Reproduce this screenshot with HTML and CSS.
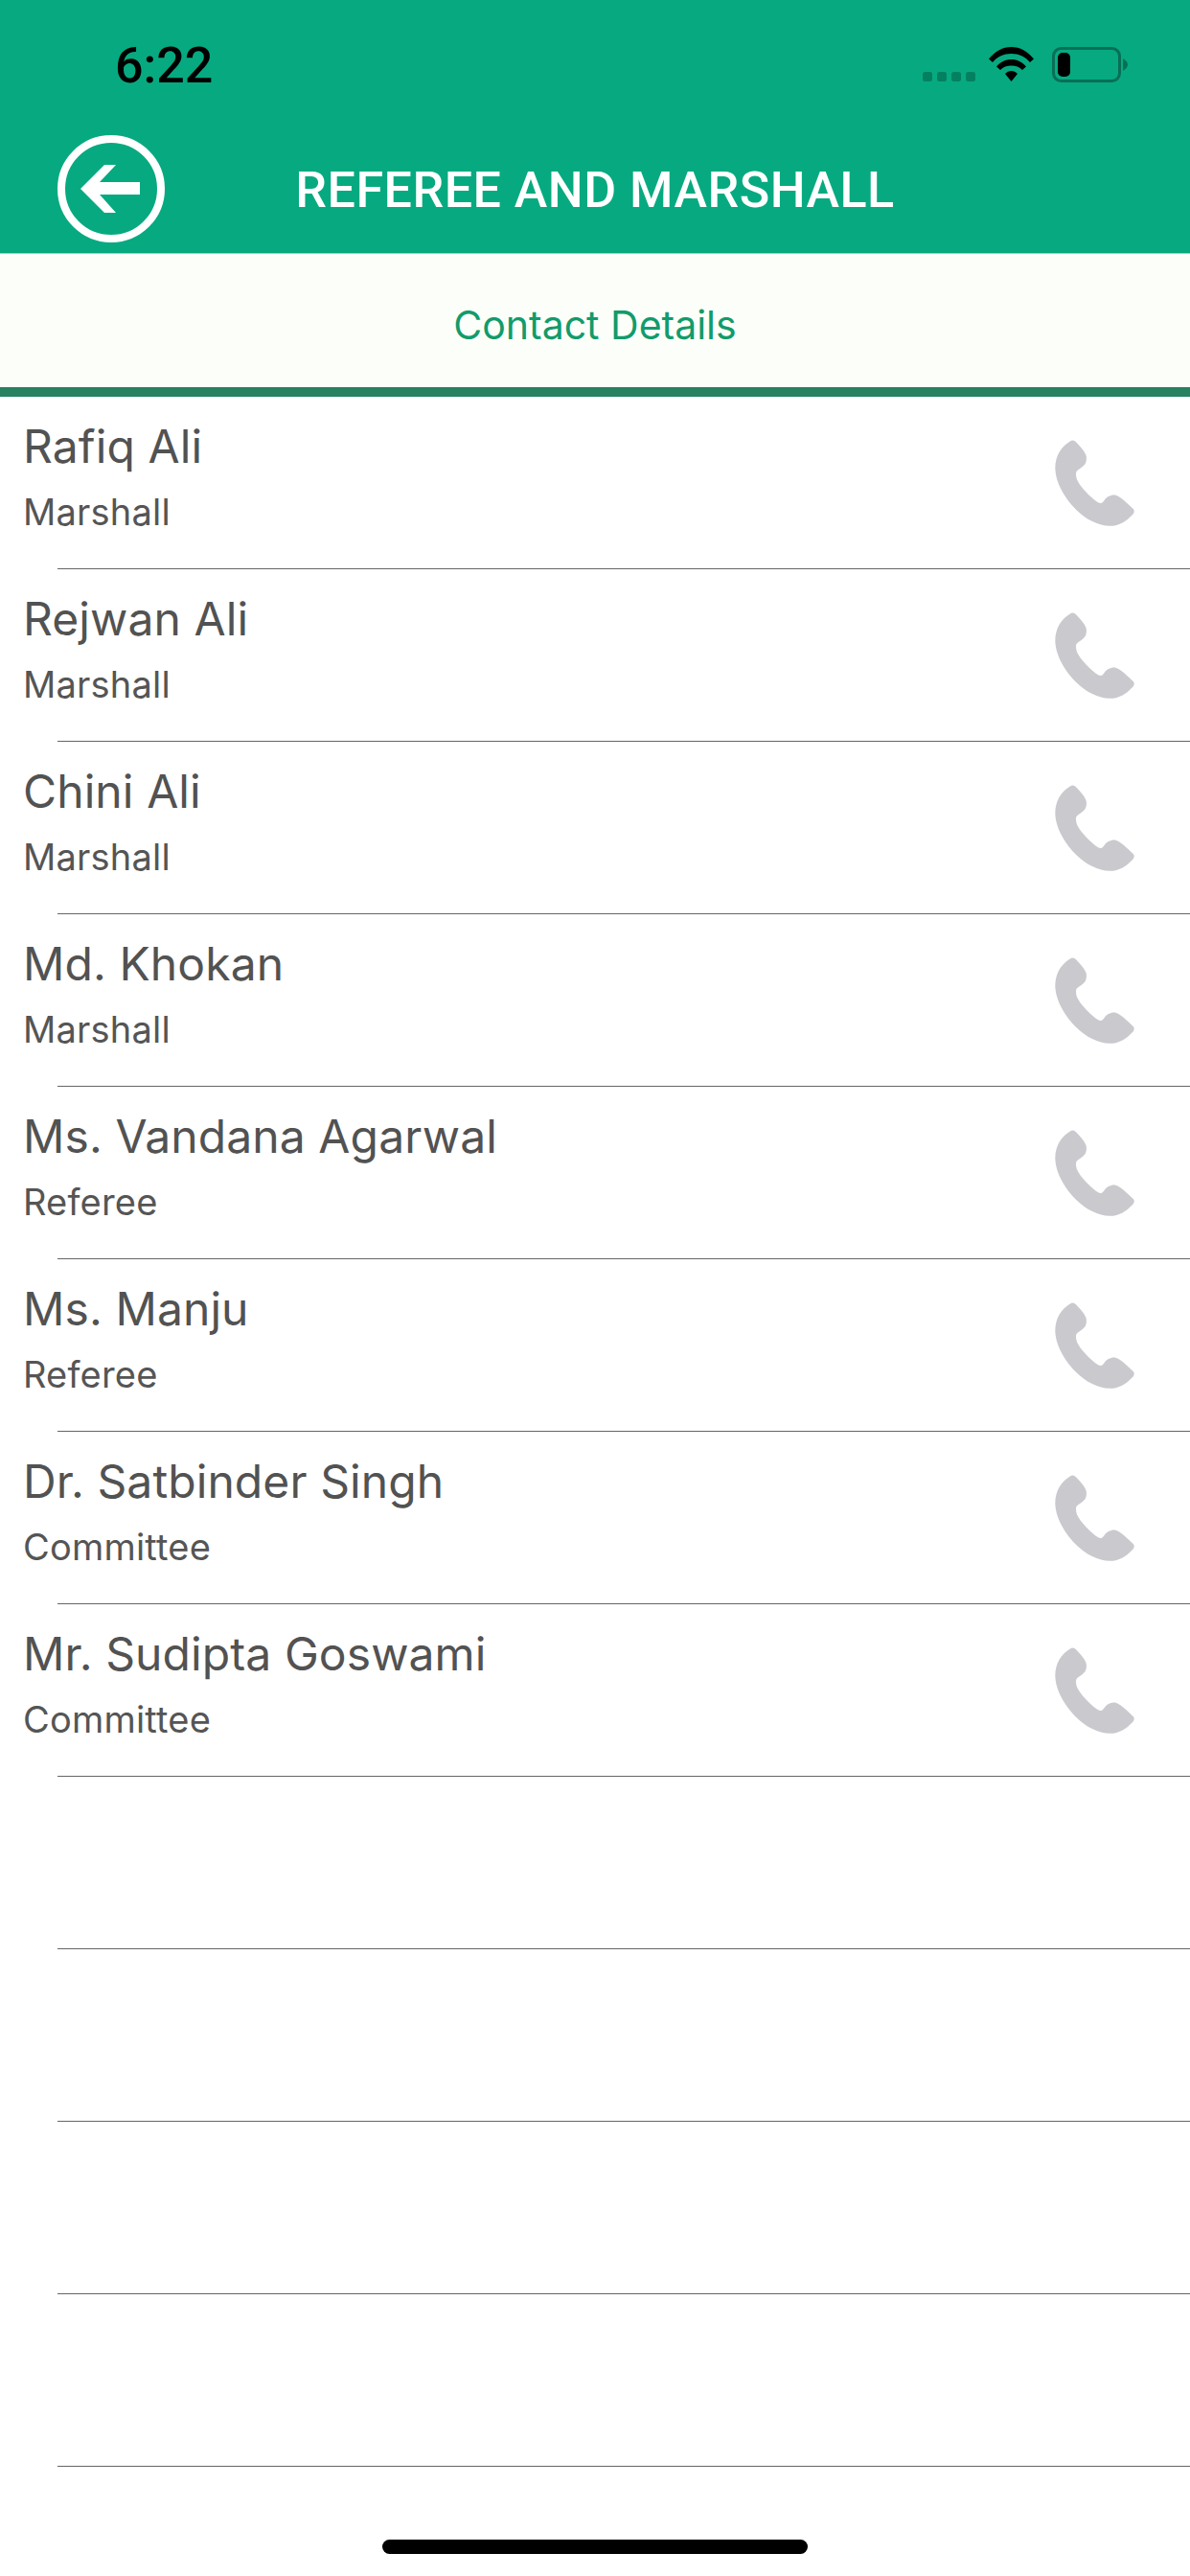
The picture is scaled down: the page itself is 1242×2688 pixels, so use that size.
FILE: index.html
```html
<!DOCTYPE html>
<html lang="en">
<head>
<meta charset="utf-8">
<title>Referee and Marshall</title>
<link rel="stylesheet" href="styles.css">
</head>
<body>
<svg class="defs" width="0" height="0" aria-hidden="true">
  <symbol id="phone" viewBox="0 0 246 266">
    <path d="M47 4C54 -1 60 1 66 7C78 19 90 33 96 46C99 54 98 68 92 76C85 84 74 90 67 97C64 102 65 112 68 122C78 145 112 180 135 194C143 198 148 193 153 186C160 176 172 169 186 170C200 172 230 201 243 214C247 220 245 227 238 233C222 250 200 266 170 266C135 265 95 246 66 216C36 186 3 138 1 90C0 50 20 20 47 4Z"/>
  </symbol>
</svg>
<div class="screen">
  <header class="header">
    <div class="status">
      <span class="time">6:22</span>
      <div class="status-icons">
        <div class="signal"><i></i><i></i><i></i><i></i></div>
        <svg class="wifi" viewBox="0 0 47 36" width="47" height="36">
          <path d="M0 12.500C6.500 4.500 14.500 0 23.500 0C32.500 0 40.500 4.500 47 12.500L43 16C38 10 31 7 23.500 7C16 7 9 10 4 16Z"/>
          <path d="M8 20.500C12 15.500 17.500 13 23.500 13C29.500 13 35 15.500 39 20.500L35 24C32 20.800 28 19.500 23.500 19.500C19 19.500 15 20.800 12 24Z"/>
          <path d="M17 28C18.800 26 21 25 23.500 25C26 25 28.200 26 30 28L23.500 36Z"/>
        </svg>
        <svg class="battery" viewBox="0 0 79 37" width="79" height="37">
          <rect class="battery-shell" x="1.500" y="1.500" width="69" height="34" rx="8"/>
          <rect class="battery-level" x="6" y="6" width="13" height="25" rx="5"/>
          <path class="battery-nub" d="M74 12C77 14 79 16 79 18.500C79 21 77 23 74 25Z"/>
        </svg>
      </div>
    </div>
    <div class="navbar">
      <svg class="back" viewBox="0 0 112 112" width="112" height="112">
        <circle class="back-ring" cx="56" cy="56" r="52"/>
        <path class="back-arrow" d="M24 56L49 31H61L44 49H86V62H44L61 81H49Z"/>
      </svg>
      <h1 class="title">REFEREE AND MARSHALL</h1>
    </div>
  </header>
  <div class="subhead">Contact Details</div>
  <main class="list">
    <div class="row"><div class="row-body"><div class="who"><div class="name">Rafiq Ali</div><div class="role">Marshall</div></div><svg class="call"><use href="#phone"/></svg></div><div class="sep"></div></div>
    <div class="row"><div class="row-body"><div class="who"><div class="name">Rejwan Ali</div><div class="role">Marshall</div></div><svg class="call"><use href="#phone"/></svg></div><div class="sep"></div></div>
    <div class="row"><div class="row-body"><div class="who"><div class="name">Chini Ali</div><div class="role">Marshall</div></div><svg class="call"><use href="#phone"/></svg></div><div class="sep"></div></div>
    <div class="row"><div class="row-body"><div class="who"><div class="name">Md. Khokan</div><div class="role">Marshall</div></div><svg class="call"><use href="#phone"/></svg></div><div class="sep"></div></div>
    <div class="row"><div class="row-body"><div class="who"><div class="name">Ms. Vandana Agarwal</div><div class="role">Referee</div></div><svg class="call"><use href="#phone"/></svg></div><div class="sep"></div></div>
    <div class="row"><div class="row-body"><div class="who"><div class="name">Ms. Manju</div><div class="role">Referee</div></div><svg class="call"><use href="#phone"/></svg></div><div class="sep"></div></div>
    <div class="row"><div class="row-body"><div class="who"><div class="name">Dr. Satbinder Singh</div><div class="role">Committee</div></div><svg class="call"><use href="#phone"/></svg></div><div class="sep"></div></div>
    <div class="row"><div class="row-body"><div class="who"><div class="name">Mr. Sudipta Goswami</div><div class="role">Committee</div></div><svg class="call"><use href="#phone"/></svg></div><div class="sep"></div></div>
    <div class="row"><div class="row-body"></div><div class="sep"></div></div>
    <div class="row"><div class="row-body"></div><div class="sep"></div></div>
    <div class="row"><div class="row-body"></div><div class="sep"></div></div>
    <div class="row"><div class="row-body"></div><div class="sep"></div></div>
  </main>
  <div class="home-wrap"><div class="home"></div></div>
</div>
</body>
</html>
```
FILE: styles.css
```css
* { box-sizing: border-box; }
html, body { margin: 0; padding: 0; background: #fff; }
.defs { display: block; height: 0; }
.screen {
  width: 1242px;
  height: 2688px;
  overflow: hidden;
  display: flex;
  flex-direction: column;
  font-family: Inter, "Liberation Sans", sans-serif;
}
.header {
  height: 265px;
  background: #07aa80;
  border-bottom: 1px solid #b9c9c2;
  display: flex;
  flex-direction: column;
}
.status {
  height: 141px;
  display: flex;
  justify-content: space-between;
  align-items: flex-start;
  padding: 49px 65px 0 120px;
}
.time {
  font-family: Roboto, sans-serif;
  font-size: 52px;
  line-height: 40px;
  font-weight: 500;
  color: #000;
}
.status-icons { display: flex; align-items: flex-start; }
.signal { display: flex; gap: 5px; margin-top: 26px; margin-right: 14px; }
.signal i { display: block; width: 10px; height: 10px; border-radius: 2.500px; background: #038060; }
.wifi { display: block; fill: #000; margin-right: 19px; }
.battery { display: block; }
.battery-shell { fill: none; stroke: #086f56; stroke-width: 3px; }
.battery-level { fill: #000; }
.battery-nub { fill: #086f56; }
.navbar {
  position: relative;
  height: 123px;
  display: flex;
  align-items: flex-start;
  justify-content: center;
}
.back { position: absolute; left: 60px; top: 0; fill: none; }
.back-ring { stroke: #fff; stroke-width: 8px; }
.back-arrow { fill: #fff; }
.title {
  margin: 34px 0 0;
  font-family: Roboto, sans-serif;
  font-size: 52px;
  line-height: 48px;
  font-weight: 500;
  letter-spacing: 0.5px;
  color: #fff;
}
.subhead {
  height: 149px;
  background: #fcfff9;
  border-bottom: 10px solid #288160;
  color: #129b6b;
  font-size: 41px;
  line-height: 38px;
  padding-top: 55px;
  text-align: center;
}
.list { display: flex; flex-direction: column; }
.row { height: 180px; display: flex; flex-direction: column; }
.row-body {
  flex: 1;
  display: flex;
  justify-content: space-between;
  align-items: flex-start;
  padding-left: 24px;
  padding-right: 58px;
}
.sep { height: 1.500px; margin-left: 60px; background: #666; }
.who { padding-top: 22px; }
.name { font-size: 48px; line-height: 60px; letter-spacing: 0.1px; color: #525252; }
.role { font-size: 38px; line-height: 46px; margin-top: 15px; letter-spacing: 0.2px; color: #555; }
.call { width: 83px; height: 90px; margin-top: 45px; fill: #c9c9ce; }
.home-wrap { flex: 1; display: flex; justify-content: center; padding-top: 76px; }
.home { width: 444px; height: 15px; border-radius: 8px; background: #000; }
```
